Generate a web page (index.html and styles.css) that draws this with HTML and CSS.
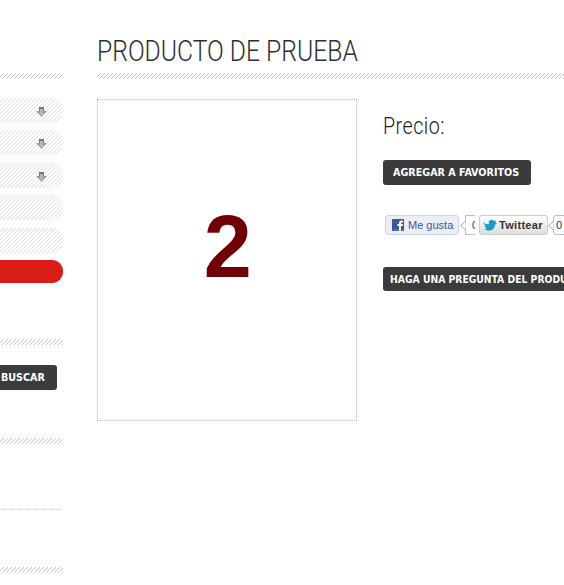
FILE: index.html
```html
<!DOCTYPE html>
<html lang="es">
<head>
<meta charset="utf-8">
<title>Producto de prueba</title>
<link rel="stylesheet" href="styles.css">
</head>
<body>
<div class="page">
  <aside class="sidebar">
    <div class="rule"></div>
    <ul class="menu">
      <li><svg class="arrow" width="11" height="10" viewBox="0 0 11 10"><path d="M3 0h5v4H3z" fill="#777"/><path d="M0 4h11L5.500 10z" fill="#999"/><path d="M4 2h3v4h2L5.500 9 2 6h2z" fill="#b5b5b5"/></svg></li>
      <li><svg class="arrow" width="11" height="10" viewBox="0 0 11 10"><path d="M3 0h5v4H3z" fill="#777"/><path d="M0 4h11L5.500 10z" fill="#999"/><path d="M4 2h3v4h2L5.500 9 2 6h2z" fill="#b5b5b5"/></svg></li>
      <li><svg class="arrow" width="11" height="10" viewBox="0 0 11 10"><path d="M3 0h5v4H3z" fill="#777"/><path d="M0 4h11L5.500 10z" fill="#999"/><path d="M4 2h3v4h2L5.500 9 2 6h2z" fill="#b5b5b5"/></svg></li>
      <li></li>
      <li></li>
      <li class="active"></li>
    </ul>
    <div class="rule"></div>
    <button class="btn search"><span>BUSCAR</span></button>
    <div class="rule"></div>
    <div class="dots"></div>
    <div class="rule"></div>
  </aside>
  <main class="main">
    <h1><span>PRODUCTO DE PRUEBA</span></h1>
    <div class="rule"></div>
    <div class="product">
      <div class="photo"><span>2</span></div>
      <div class="info">
        <h2><span>Precio:</span></h2>
        <button class="btn fav"><span>AGREGAR A FAVORITOS</span></button>
        <div class="social">
          <div class="like">
            <svg width="12" height="12" viewBox="0 0 12 12"><path d="M0 0h12v12H0z" fill="#3b5998"/><path d="M7 12V7H5.500V5H7V4Q7 1.500 9.500 1.500H11v2H10Q9 3.500 9 4.200V5h2l-.3 2H9v5z" fill="#fff"/><path d="M1 10.500h10v1H1z" fill="#8da0cb" opacity=".6"/></svg>
            <span>Me gusta</span>
          </div>
          <div class="count like-count"><svg class="tip" width="6" height="9" viewBox="0 0 6 9"><path d="M5.500 0L1 4.500 5.500 9" fill="#fff" stroke="#999"/></svg><span>0</span></div>
          <div class="tweet">
            <svg width="14" height="12" viewBox="0 0 14 12"><path d="M0 3Q3 6 6 5Q5 2.500 7.500 1Q9.500 0 11 2L13 1.500 12.500 3.500 14 4.500 12.200 5.500Q11.500 11 6.500 11.500Q3.500 12 1.500 10L4 9Q2 8.500 1.500 7L3 6.900Q.8 6 0 3z" fill="#1c9ac8"/></svg>
            <span>Twittear</span>
          </div>
          <div class="count tweet-count"><svg class="tip" width="6" height="9" viewBox="0 0 6 9"><path d="M5.500 0L1 4.500 5.500 9" fill="#fff" stroke="#999"/></svg><span>0</span></div>
        </div>
        <button class="btn ask"><span>HAGA UNA PREGUNTA DEL PRODU</span></button>
      </div>
    </div>
  </main>
</div>
</body>
</html>
```

FILE: styles.css
```css
* { box-sizing: border-box; }
html { overflow: hidden; }
body { margin: 0; background: #fff; overflow: hidden; font-family: "Liberation Sans", sans-serif; }
h1, h2, ul { margin: 0; padding: 0; font-weight: normal; list-style: none; }
span { display: inline-block; white-space: nowrap; }
svg { display: block; flex: none; }

.page { display: flex; gap: 34px; width: 564px; height: 585px; overflow: hidden; }
.rule {
  height: 6px;
  background: url("data:image/svg+xml,%3Csvg xmlns='http://www.w3.org/2000/svg' width='4' height='4' shape-rendering='crispEdges'%3E%3Cpath d='M3 0h1v1H3zM2 1h1v1H2zM1 2h1v1H1zM0 3h1v1H0z' fill='%23c6c6c6'/%3E%3C/svg%3E");
}

/* Sidebar */
.sidebar { width: 63px; flex: none; padding-top: 73px; }
.menu { padding-top: 19px; height: 260px; display: flex; flex-direction: column; gap: 7.400px; }
.menu li {
  height: 25px;
  flex: none;
  border-radius: 0 11px 11px 0;
  padding: 9px 0 0 36px;
  background: #fefefe url("data:image/svg+xml,%3Csvg xmlns='http://www.w3.org/2000/svg' width='4' height='4' shape-rendering='crispEdges'%3E%3Cpath d='M3 0h1v1H3zM2 1h1v1H2zM1 2h1v1H1zM0 3h1v1H0z' fill='%23dfdfdf'/%3E%3C/svg%3E");
}
.menu .active {
  height: 23px;
  background: #dc1f1b url("data:image/svg+xml,%3Csvg xmlns='http://www.w3.org/2000/svg' width='4' height='4' shape-rendering='crispEdges'%3E%3Cpath d='M3 0h1v1H3zM2 1h1v1H2zM1 2h1v1H1zM0 3h1v1H0z' fill='%23b5241c'/%3E%3C/svg%3E");
}
.dots { height: 1px; margin: 65px 2px 57px 0; border-top: 1px dotted #ccc; }

/* Buttons */
.btn {
  display: block;
  height: 25px;
  padding: 1px 0 0;
  border: 0;
  border-radius: 3px;
  color: #fff;
  font: bold 11px/24px "DejaVu Sans Condensed", "DejaVu Sans", sans-serif;
  font-stretch: condensed;
  text-align: left;
  background: #383838 url("data:image/svg+xml,%3Csvg xmlns='http://www.w3.org/2000/svg' width='4' height='4' shape-rendering='crispEdges'%3E%3Cpath d='M3 0h1v1H3zM2 1h1v1H2zM1 2h1v1H1zM0 3h1v1H0z' fill='%23454545'/%3E%3C/svg%3E");
}
.btn span { transform-origin: 0 50%; transform: scaleX(.97); }
.search { width: 57px; margin: 20px 0 48px; padding-left: 1px; border-radius: 0 3px 3px 0; }

/* Main column */
.main { flex: none; width: 620px; }
h1 { height: 73px; padding-top: 32px; }
h1 span { font: 300 30px/37px Roboto, sans-serif; color: #2c302e; transform: scaleX(.823); transform-origin: 0 50%; }
.product { display: flex; gap: 26px; padding-top: 20px; }
.photo { width: 260px; height: 322px; flex: none; border: 1px dotted #bbb; text-align: center; padding: 96px 0 0 1px; }
.photo span { font: bold 89px/100px "Liberation Sans", sans-serif; color: #700006; transform: scaleX(.97); }
.info { flex: none; padding-top: 12px; }
h2 { height: 49px; }
h2 span { font: 300 24px/30px Roboto, sans-serif; color: #222; letter-spacing: .6px; transform: scaleX(.82); transform-origin: 0 50%; }
.fav { width: 148px; padding-left: 10px; }
.ask { width: 230px; height: 24px; line-height: 23px; padding-left: 7px; margin-top: 32px; }
.ask span { transform: scaleX(.935); }

.social { display: flex; height: 20px; margin: 30px 0 0 2px; font-size: 11px; }
.like, .tweet { display: flex; align-items: center; height: 20px; border-radius: 3px; }
.like { width: 74px; padding-left: 6px; gap: 4px; border: 1px solid #cad4e7; background: #eceef5; color: #3b5998; }
.tweet { width: 69px; padding-left: 3px; gap: 2px; margin-left: 4px; border: 1px solid #ccc; background: linear-gradient(#fff, #dedede); color: #333; font-weight: bold; letter-spacing: .3px; }
.count { position: relative; height: 20px; border: 1px solid #bbb; background: #fff; color: #333; line-height: 18px; }
.tip { position: absolute; left: -6px; top: 5px; }
.like-count { width: 10px; margin-left: 6px; border-right: 0; padding-left: 6px; }
.like-count span { width: 3px; overflow: hidden; }
.tweet-count { width: 30px; margin-left: 5px; border-radius: 3px; padding-left: 2px; }
```
